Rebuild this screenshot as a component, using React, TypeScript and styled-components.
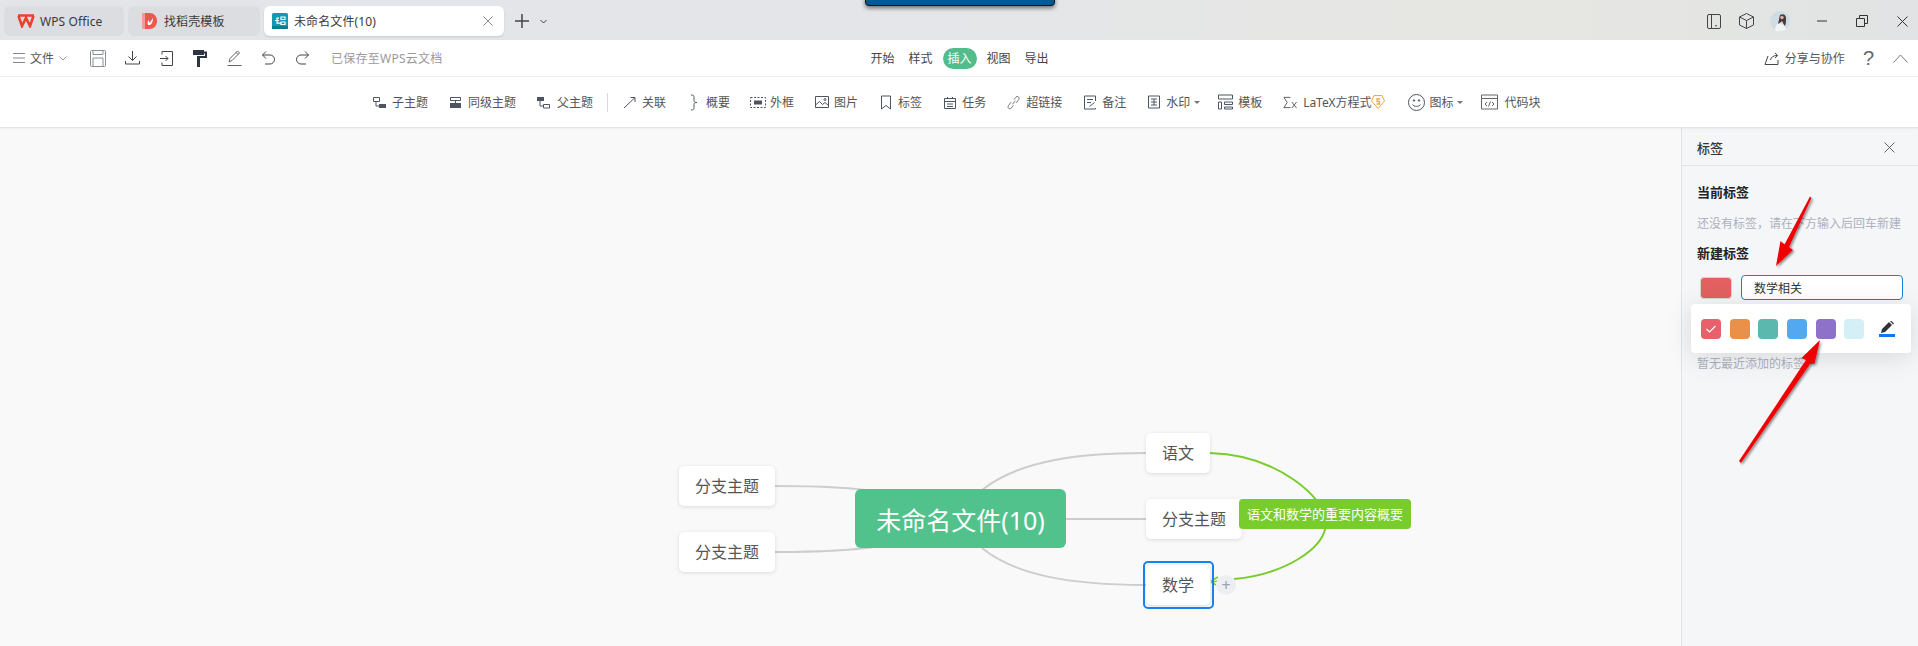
import * as React from 'react';
import styled, { createGlobalStyle } from 'styled-components';

const GlobalStyle = createGlobalStyle`
    html, body {
        margin: 0;
        padding: 0;
        overflow: hidden;
    }
    body {
        font-family: "Noto Sans", "Noto Sans CJK SC", sans-serif;
        font-size: 12px;
        color: #555;
    }
`;

const Page = styled.div`
    position: relative;
    display: flex;
    flex-direction: column;
    width: 1918px;
    height: 646px;
    overflow: hidden;
`;

const TitleBar = styled.div`
    display: flex;
    align-items: flex-start;
    flex: none;
    height: 40px;
    box-sizing: border-box;
    padding: 6px 6px 0 4px;
    background: linear-gradient(90deg, #e3e5e9 0%, #e3e5e9 45%, #e6e7e2 78%, #e1e3e4 100%);
`;

const Tab = styled.div<{ $w: number; $pl: number; $active?: boolean }>`
    display: flex;
    align-items: center;
    flex: none;
    width: ${p => p.$w}px;
    height: 30px;
    box-sizing: border-box;
    margin-right: 4px;
    padding-left: ${p => p.$pl}px;
    border-radius: 6px;
    background: ${p => (p.$active ? '#fff' : '#dbdde1')};
    box-shadow: ${p => (p.$active ? '0 1px 2px rgba(0,0,0,.12)' : 'none')};
    color: #3a3a3a;
    font-size: 12px;
`;

const TabLabel = styled.span<{ $ml: number }>`
    margin-left: ${p => p.$ml}px;
    white-space: nowrap;
    letter-spacing: .1px;
`;

const TabClose = styled.span`
    display: flex;
    margin-left: auto;
    margin-right: 11px;
`;

const NewTab = styled.div`
    display: flex;
    align-items: center;
    gap: 11px;
    height: 30px;
    margin-left: 7px;
`;

const WindowControls = styled.div`
    display: flex;
    align-items: center;
    height: 30px;
    margin-left: auto;
`;

const WindowControl = styled.span<{ $ml: number }>`
    display: flex;
    justify-content: center;
    width: 20px;
    margin-left: ${p => p.$ml}px;
`;

const ScreenEdge = styled.div`
    position: absolute;
    top: -3px;
    left: 865px;
    width: 190px;
    height: 9px;
    box-sizing: border-box;
    border: 1px solid #0b1218;
    border-radius: 0 0 4px 4px;
    background: #005a90;
    box-shadow: 0 2px 4px rgba(0,0,0,.55);
`;

const MenuBar = styled.div`
    display: grid;
    grid-template-columns: 1fr auto 1fr;
    align-items: center;
    flex: none;
    height: 37px;
    box-sizing: border-box;
    border-bottom: 1px solid #ededed;
    background: #fff;
`;

const MenuLeft = styled.div`
    display: flex;
    align-items: center;
    padding-left: 13px;
`;

const MenuIcon = styled.span<{ $ml: number }>`
    display: flex;
    justify-content: center;
    width: 18px;
    margin-left: ${p => p.$ml}px;
`;

const FileLabel = styled.span`
    margin: 0 5px;
    color: #555;
`;

const SavedText = styled.span`
    margin-left: 20px;
    color: #9a9a9a;
    white-space: nowrap;
    letter-spacing: .25px;
`;

const MenuTabs = styled.div`
    display: flex;
    align-items: center;
    gap: 10px;
    margin-left: 1px;
`;

const MenuTab = styled.span<{ $active?: boolean }>`
    display: flex;
    align-items: center;
    justify-content: center;
    width: ${p => (p.$active ? 34 : 24)}px;
    height: 21px;
    border-radius: 11px;
    background: ${p => (p.$active ? '#52bd8b' : 'transparent')};
    color: ${p => (p.$active ? '#fff' : '#444')};

    &:first-child {
        margin-right: 4px;
    }
    &:last-child {
        margin-left: 4px;
    }
`;

const MenuRight = styled.div`
    display: flex;
    align-items: center;
    justify-content: flex-end;
    padding-right: 10px;
`;

const ShareLabel = styled.span`
    margin-left: 6px;
    color: #555;
`;

const HelpMark = styled.span`
    margin-left: 18px;
    color: #666;
    font-family: "Liberation Sans", sans-serif;
    font-size: 20px;
    line-height: 20px;
`;

const CollapseIcon = styled.span`
    display: flex;
    margin-left: 19px;
`;

const Ribbon = styled.div`
    display: flex;
    align-items: center;
    flex: none;
    height: 51px;
    box-sizing: border-box;
    padding-left: 373px;
    border-bottom: 1px solid #e4e4e4;
    background: #fff;
    box-shadow: 0 1px 2px rgba(0,0,0,.05);
    position: relative;
    z-index: 1;
`;

const RibbonItem = styled.div<{ $ml: number }>`
    display: flex;
    align-items: center;
    flex: none;
    margin-left: ${p => p.$ml}px;
    color: #555;
    white-space: nowrap;
`;

const RibbonIcon = styled.span<{ $w: number; $gap: number }>`
    display: flex;
    justify-content: center;
    width: ${p => p.$w}px;
    margin-right: ${p => p.$gap}px;
`;

const RibbonSeparator = styled.span`
    flex: none;
    width: 1px;
    height: 19px;
    margin: 0 15px 0 14px;
    background: #d9d9d9;
`;

const Caret = styled.span`
    width: 0;
    height: 0;
    margin-left: 4px;
    border-left: 3px solid transparent;
    border-right: 3px solid transparent;
    border-top: 3px solid #777;
`;

const LatexLabel = styled.span`
    letter-spacing: -.05px;
`;

const Workspace = styled.div`
    display: flex;
    flex: 1;
    min-height: 0;
`;

const Canvas = styled.div`
    position: relative;
    flex: 1;
    background: #f9f9f9;
`;

const MapLines = styled.svg`
    position: absolute;
    inset: 0;
    width: 100%;
    height: 100%;
`;

const MapNode = styled.div<{ $x: number; $y: number; $w: number }>`
    position: absolute;
    left: ${p => p.$x}px;
    top: ${p => p.$y}px;
    display: flex;
    align-items: center;
    justify-content: center;
    width: ${p => p.$w}px;
    height: 40px;
    box-sizing: border-box;
    padding-bottom: 2px;
    border-radius: 5px;
    background: #fff;
    box-shadow: 0 1px 4px rgba(0,0,0,.12);
    color: #555;
    font-size: 16px;
`;

const RootNode = styled.div`
    position: absolute;
    left: 855px;
    top: 361px;
    display: flex;
    align-items: center;
    justify-content: center;
    width: 211px;
    height: 59px;
    border-radius: 6px;
    background: #52c28c;
    color: #fff;
    font-size: 25px;
`;

const SummaryNode = styled.div`
    position: absolute;
    left: 1239px;
    top: 371px;
    display: flex;
    align-items: center;
    justify-content: center;
    width: 172px;
    height: 30px;
    box-sizing: border-box;
    padding-bottom: 2px;
    border-radius: 4px;
    background: #78cd2c;
    color: #fff;
    font-size: 13px;
    white-space: nowrap;
`;

const SelectionRing = styled.div`
    position: absolute;
    left: 1143px;
    top: 433px;
    width: 71px;
    height: 48px;
    box-sizing: border-box;
    border: 2px solid #1781f0;
    border-radius: 5px;
`;

const AddButton = styled.div`
    position: absolute;
    left: 1216px;
    top: 447px;
    display: flex;
    align-items: center;
    justify-content: center;
    width: 20px;
    height: 20px;
    border-radius: 50%;
    background: #eceef2;
    color: #9aa3b5;
    font-size: 16px;
    line-height: 20px;
`;

const SidePanel = styled.aside`
    position: relative;
    flex: none;
    width: 237px;
    box-sizing: border-box;
    border-left: 1px solid #e2e3e6;
    background: #f5f6f8;
`;

const PanelHeader = styled.div`
    display: flex;
    align-items: center;
    justify-content: space-between;
    height: 38px;
    box-sizing: border-box;
    padding: 1px 23px 0 15px;
    border-bottom: 1px solid #e2e3e6;
    color: #333;
    font-size: 13px;
    font-weight: 500;
`;

const PanelBody = styled.div`
    padding: 17px 15px 0;
`;

const PanelHeading = styled.div<{ $mt?: number }>`
    margin-top: ${p => p.$mt || 0}px;
    color: #222;
    font-size: 13px;
    line-height: 18px;
    font-weight: 700;
`;

const PanelHint = styled.div<{ $mt: number }>`
    margin-top: ${p => p.$mt}px;
    color: #adb1bd;
    font-size: 12px;
    line-height: 18px;
    white-space: nowrap;
`;

const NewTagRow = styled.div`
    display: flex;
    align-items: center;
    gap: 9px;
    height: 25px;
    margin-top: 13px;
    padding-left: 3px;
`;

const ColorChip = styled.div`
    flex: none;
    width: 32px;
    height: 22px;
    box-sizing: border-box;
    border: 1px solid #d9d2d2;
    border-radius: 4px;
    background: #e26060;
`;

const TagInput = styled.div`
    display: flex;
    align-items: center;
    flex: 1;
    height: 25px;
    box-sizing: border-box;
    padding-left: 12px;
    border: 1px solid #1a7ee0;
    border-radius: 4px;
    background: #fff;
    color: #333;
`;

const ColorPopup = styled.div`
    position: absolute;
    left: 9px;
    top: 176px;
    display: flex;
    align-items: center;
    gap: 8.7px;
    width: 220px;
    height: 49px;
    box-sizing: border-box;
    padding: 0 16px 0 10px;
    border-radius: 4px;
    background: #fff;
    box-shadow: 0 4px 26px rgba(0,0,0,.12);
`;

const ColorSwatch = styled.span<{ $color: string }>`
    display: flex;
    align-items: center;
    justify-content: center;
    flex: none;
    width: 20px;
    height: 20px;
    border-radius: 4px;
    background: ${p => p.$color};
`;

const PenButton = styled.span`
    display: flex;
    flex-direction: column;
    align-items: center;
    gap: 1px;
    width: 16px;
    margin-left: auto;
`;

const PenUnderline = styled.span`
    width: 16px;
    height: 3px;
    background: #1a73f0;
`;

const ArrowLayer = styled.svg`
    position: absolute;
    inset: 0;
    width: 100%;
    height: 100%;
    pointer-events: none;
    z-index: 5;
`;

const INK = '#4d5563';

function Glyph({ w = 14, h = 14, children, stroke = INK, sw = 1 }: { w?: number; h?: number; children: React.ReactNode; stroke?: string; sw?: number }) {
    return (
        <svg width={w} height={h} viewBox={`0 0 ${w} ${h}`} fill="none" stroke={stroke} strokeWidth={sw}>
            {children}
        </svg>
    );
}

const ribbonItems = [
    { label: '子主题', ml: 0, w: 13, gap: 6, icon: <Glyph w={13} h={13}><path d="M.5 1.500h6v4h-6zM3 5.500v4.500h3" /><rect x="6" y="8" width="7" height="4" fill={INK} stroke="none" /></Glyph> },
    { label: '同级主题', ml: 21, w: 13, gap: 6, icon: <Glyph w={13} h={13}><path d="M1.500 1.500h10v3h-10zM6.500 4.500v3" /><rect x="1" y="7" width="11" height="5" fill={INK} stroke="none" /></Glyph> },
    { label: '父主题', ml: 21, w: 13, gap: 7, icon: <Glyph w={13} h={13}><rect x="0" y="1" width="7" height="4" fill={INK} stroke="none" /><path d="M3 5v5h3M6.500 8.500h6v3.500h-6z" /></Glyph> },
    { label: '关联', ml: 0, w: 13, gap: 6, icon: <Glyph w={13} h={13}><path d="M1 12 12 1.500M7.500 1.500H12V6" /></Glyph> },
    { label: '概要', ml: 24, w: 10, gap: 6, icon: <Glyph w={10} h={17}><path d="M1 1c3 0 3 1 3 3v2.500c0 1.500 1 2 3 2-2 0-3 .5-3 2V13c0 2 0 3-3 3" /></Glyph> },
    { label: '外框', ml: 20, w: 16, gap: 4, icon: <Glyph w={16} h={13}><path d="M.5 1.500h15v10H.5z" strokeDasharray="2 1.500" /><rect x="4" y="4.500" width="8" height="4" fill={INK} stroke="none" /></Glyph> },
    { label: '图片', ml: 21, w: 14, gap: 5, icon: <Glyph w={14} h={14}><path d="M.5 1.500h13v11H.5zM.5 10l4-3.500 3 3 2.500-2 3.500 3" /><circle cx="10" cy="4.500" r="1" /></Glyph> },
    { label: '标签', ml: 23, w: 10, gap: 7, icon: <Glyph w={10} h={15}><path d="M.5 1h9v13L5 10.500.5 14z" /></Glyph> },
    { label: '任务', ml: 22, w: 12, gap: 6, icon: <Glyph w={12} h={13}><path d="M.5 2.500h11v10H.5zM.5 5.500h11M3.500 1v2M8.500 1v2M3 8h6M3 10.500h6" /></Glyph> },
    { label: '超链接', ml: 21, w: 13, gap: 6, icon: <Glyph w={14} h={15} stroke="#777"><path d="M6 9.500 9 5.500M4.500 7 1.500 11a2 2 0 0 0 3.200 2.500L7 10.500M7.500 4.500l2-2.700a2 2 0 0 1 3.200 2.400L10 8" /></Glyph> },
    { label: '备注', ml: 22, w: 12, gap: 6, icon: <Glyph w={12} h={15}><path d="M11.500 6V1H.5v13h11v-1M3 4.500h6M3 7.500h4M5.500 11.500l5-4" /></Glyph> },
    { label: '水印', ml: 22, w: 12, gap: 6, caret: true, icon: <Glyph w={12} h={14}><path d="M.5 1h11v12H.5zM3 4h6M6 4v6M3 7h6M3 10h6" /></Glyph> },
    { label: '模板', ml: 18, w: 15, gap: 5, icon: <Glyph w={15} h={16}><path d="M.5 1h14v4H.5zM.5 8h3v7h-3zM6.500 8h8v2.500h-8zM6.500 13h8v2h-8z" /></Glyph> },
];

const ribbonTail = [
    { label: '图标', ml: 23, w: 17, gap: 4, caret: true, icon: <Glyph w={17} h={17}><circle cx="8.500" cy="8.500" r="8" /><path d="M4.500 10.500c1.500 2.500 6.500 2.500 8 0" /><circle cx="6" cy="6.500" r=".7" fill={INK} /><circle cx="11" cy="6.500" r=".7" fill={INK} /></Glyph> },
    { label: '代码块', ml: 18, w: 17, gap: 6, icon: <Glyph w={17} h={16} stroke="#666"><path d="M.5 1h16v14H.5zM.5 4.500h16M6 8l-2 2 2 2M11 8l2 2-2 2M9.500 7.500l-2 5" /></Glyph> },
];

function RibbonEntry({ item }: { item: { label: React.ReactNode; ml: number; w: number; gap: number; icon: React.ReactNode; caret?: boolean } }) {
    return (
        <RibbonItem $ml={item.ml}>
            <RibbonIcon $w={item.w} $gap={item.gap}>{item.icon}</RibbonIcon>
            {item.label}
            {item.caret && <Caret />}
        </RibbonItem>
    );
}

function App() {
    return (
        <Page>
            <GlobalStyle />
            <TitleBar>
                <Tab $w={120} $pl={13}>
                    <svg width="18" height="14" viewBox="0 0 18 14" fill="none" stroke="#f0402c" strokeWidth="2.600">
                        <path d="M1.500 2 5 12l4-8 4 8 3.500-10M1 1.500h16" />
                    </svg>
                    <TabLabel $ml={5}>WPS Office</TabLabel>
                </Tab>
                <Tab $w={132} $pl={14}>
                    <svg width="15" height="18" viewBox="0 0 15 18">
                        <path d="M0 1h7c5 0 8 3.500 8 8s-3 8-8 8H0z" fill="#ee5650" />
                        <rect x="0" y="1" width="3" height="16" fill="#f59a94" />
                        <path d="M6 13c-1-3 0-4 1-5 0 1 0 2 1 3 1-2 2-4 3-5 0 3-1 6-3 7z" fill="#fff" />
                    </svg>
                    <TabLabel $ml={7}>找稻壳模板</TabLabel>
                </Tab>
                <Tab $w={240} $pl={8} $active>
                    <svg width="16" height="16" viewBox="0 0 16 16" fill="none">
                        <rect width="16" height="16" rx="1.500" fill="#109bb0" />
                        <rect y="13" width="16" height="3" fill="#0a7f92" />
                        <path d="M9 4h4v2.500H9zM9 9h4v2.500H9zM7 5.200H5v5h4M3 7.500h4" stroke="#fff" strokeWidth="1.200" />
                    </svg>
                    <TabLabel $ml={6}>未命名文件(10)</TabLabel>
                    <TabClose>
                        <Glyph w={10} h={10} stroke="#8a8a8a"><path d="M.5.500l9 9M9.500.500l-9 9" /></Glyph>
                    </TabClose>
                </Tab>
                <NewTab>
                    <Glyph w={14} h={14} stroke="#444" sw={1.500}><path d="M7 0v14M0 7h14" /></Glyph>
                    <Glyph w={7} h={5} stroke="#444"><path d="M.5 1 3.500 4l3-3" /></Glyph>
                </NewTab>
                <WindowControls>
                    <WindowControl $ml={0}>
                        <Glyph w={14} h={15} stroke="#444">
                            <rect x=".5" y=".5" width="13" height="14" rx="1.500" />
                            <path d="M4.500.5v14M8 11.800h2" />
                        </Glyph>
                    </WindowControl>
                    <WindowControl $ml={12}>
                        <Glyph w={15} h={16} stroke="#444"><path d="M7.500.5 14.500 4v8l-7 3.500L.5 12V4zM.5 4l7 3.500L14.500 4M7.500 7.500v8" /></Glyph>
                    </WindowControl>
                    <WindowControl $ml={14}>
                        <svg width="20" height="20" viewBox="0 0 20 20">
                            <circle cx="10" cy="10" r="10" fill="#cfdde2" />
                            <path d="M5 20c0-4 1-7 4-8l5 2 2 4c-2 2-8 3-11 2z" fill="#f0f4f5" />
                            <path d="M10 4c3-2 6 0 6 3 0 3 0 6-1 8-1-1-2-3-3-5-1 1-2 2-4 3 1-3 1-6 2-9z" fill="#4a3a3a" />
                            <circle cx="12" cy="6.500" r="1.700" fill="#e3b2ac" />
                        </svg>
                    </WindowControl>
                    <WindowControl $ml={22}>
                        <Glyph w={10} h={2} stroke="#333"><path d="M0 1h10" /></Glyph>
                    </WindowControl>
                    <WindowControl $ml={20}>
                        <Glyph w={12} h={12} stroke="#333"><path d="M.5 3.500h8v8h-8zM3.500 3.500v-3h8v8h-3" /></Glyph>
                    </WindowControl>
                    <WindowControl $ml={20}>
                        <Glyph w={11} h={11} stroke="#333"><path d="M.5.500l10 10M10.500.500l-10 10" /></Glyph>
                    </WindowControl>
                </WindowControls>
            </TitleBar>
            <ScreenEdge />
            <MenuBar>
                <MenuLeft>
                    <Glyph w={12} h={10} stroke="#888"><path d="M0 .5h12M0 5h12M0 9.500h12" /></Glyph>
                    <FileLabel>文件</FileLabel>
                    <Glyph w={8} h={5} stroke="#999"><path d="M.5.500 4 4 7.500.5" /></Glyph>
                    <MenuIcon $ml={22}>
                        <Glyph w={16} h={17} stroke="#8a8f96"><path d="M1.500.5h13a1 1 0 0 1 1 1v14a1 1 0 0 1-1 1h-13a1 1 0 0 1-1-1v-14a1 1 0 0 1 1-1zM3 .5v4h10v-4M3 16.500V8h10v8.500" /></Glyph>
                    </MenuIcon>
                    <MenuIcon $ml={16}>
                        <Glyph w={15} h={14} stroke="#444"><path d="M7.500 0v9M3.500 5.500l4 4 4-4M.5 10v3h14v-3" /></Glyph>
                    </MenuIcon>
                    <MenuIcon $ml={16}>
                        <Glyph w={13} h={15} stroke="#444"><path d="M2 3.500V.5h10.500v14H2v-3M0 7.500h8M5.500 5l2.500 2.500L5.500 10" /></Glyph>
                    </MenuIcon>
                    <MenuIcon $ml={16}>
                        <svg width="14" height="17" viewBox="0 0 14 17">
                            <path d="M0 0h11v5H0zM11 1.500h3V8H7v9H4V6h8V3.500h-1z" fill="#2d3640" />
                        </svg>
                    </MenuIcon>
                    <MenuIcon $ml={16}>
                        <Glyph w={15} h={16} stroke="#666"><path d="M.5 15.500h14M2 12l1-3.500L10.500 1l2 2L5 10.500zM9 2.500l2 2" /></Glyph>
                    </MenuIcon>
                    <MenuIcon $ml={16}>
                        <Glyph w={13} h={14} stroke="#444"><path d="M4 .5.500 4 4 7.500M.5 4H8a4.500 4.500 0 0 1 0 9H3" /></Glyph>
                    </MenuIcon>
                    <MenuIcon $ml={16}>
                        <Glyph w={13} h={14} stroke="#444"><path d="M9 .5 12.500 4 9 7.500M12.500 4H5a4.500 4.500 0 0 0 0 9h5" /></Glyph>
                    </MenuIcon>
                    <SavedText>已保存至WPS云文档</SavedText>
                </MenuLeft>
                <MenuTabs>
                    <MenuTab>开始</MenuTab>
                    <MenuTab>样式</MenuTab>
                    <MenuTab $active>插入</MenuTab>
                    <MenuTab>视图</MenuTab>
                    <MenuTab>导出</MenuTab>
                </MenuTabs>
                <MenuRight>
                    <Glyph w={15} h={13} stroke="#444"><path d="M4 4 1 12.500h13V8M6.500 8C7 5 9.500 3.500 13 3.500M11 1l2.700 2.500L11 6" /></Glyph>
                    <ShareLabel>分享与协作</ShareLabel>
                    <HelpMark>?</HelpMark>
                    <CollapseIcon>
                        <Glyph w={15} h={9} stroke="#777"><path d="M.5 8.500 7.500 1l7 7.500" /></Glyph>
                    </CollapseIcon>
                </MenuRight>
            </MenuBar>
            <Ribbon>
                {ribbonItems.slice(0, 3).map(item => <RibbonEntry key={item.label} item={item} />)}
                <RibbonSeparator />
                {ribbonItems.slice(3).map(item => <RibbonEntry key={item.label} item={item} />)}
                <RibbonEntry
                    item={{
                        label: <><LatexLabel>LaTeX方程式</LatexLabel><svg width="14" height="16" viewBox="0 0 14 16" fill="none" stroke="#f2a93b"><path d="M3 1.500h8L13.500 7 7 14.500.5 7z" /><path d="M9 5H6v2.500h2.500V10H5.500" strokeWidth="1.300" /></svg></>,
                        ml: 21,
                        w: 14,
                        gap: 6,
                        icon: <Glyph w={15} h={13} stroke="#555"><path d="M8 1H1l3.500 5.500L1 12h7M9.500 6l5 6.500M14.500 6l-5 6.500" /></Glyph>,
                    }}
                />
                {ribbonTail.map(item => <RibbonEntry key={item.label} item={item} />)}
            </Ribbon>
            <Workspace>
                <Canvas>
                    <MapLines viewBox="0 1 1681 518">
                        <g fill="none" stroke="#cdcdcd" strokeWidth="2">
                            <path d="M775 359C810 359 850 360 880 365" />
                            <path d="M775 425C810 425 850 424 880 419" />
                            <path d="M1146 326C1080 326 1020 333 982 363" />
                            <path d="M1066 392H1146" />
                            <path d="M982 421C1015 448 1070 458 1146 458" />
                        </g>
                        <path d="M1210 326C1280 328 1325 373 1326 393C1328 423 1280 448 1234 452" fill="none" stroke="#78cd2c" strokeWidth="2" />
                        <path d="M1218 450 1211 454M1218 454 1212 455M1216 458 1211 455" fill="none" stroke="#78cd2c" strokeWidth="1.500" />
                    </MapLines>
                    <MapNode $x={679} $y={338} $w={96}>分支主题</MapNode>
                    <MapNode $x={679} $y={404} $w={96}>分支主题</MapNode>
                    <MapNode $x={1146} $y={305} $w={64}>语文</MapNode>
                    <MapNode $x={1146} $y={371} $w={96}>分支主题</MapNode>
                    <MapNode $x={1146} $y={437} $w={64}>数学</MapNode>
                    <RootNode>未命名文件(10)</RootNode>
                    <SummaryNode>语文和数学的重要内容概要</SummaryNode>
                    <SelectionRing />
                    <AddButton>+</AddButton>
                </Canvas>
                <SidePanel>
                    <PanelHeader>
                        标签
                        <Glyph w={11} h={11} stroke="#666"><path d="M.5.500l10 10M10.500.500l-10 10" /></Glyph>
                    </PanelHeader>
                    <PanelBody>
                        <PanelHeading>当前标签</PanelHeading>
                        <PanelHint $mt={14}>还没有标签，请在下方输入后回车新建</PanelHint>
                        <PanelHeading $mt={11}>新建标签</PanelHeading>
                        <NewTagRow>
                            <ColorChip />
                            <TagInput>数学相关</TagInput>
                        </NewTagRow>
                        <PanelHint $mt={55}>暂无最近添加的标签</PanelHint>
                    </PanelBody>
                    <ColorPopup>
                        <ColorSwatch $color="#e8606a">
                            <Glyph w={10} h={8} stroke="#fff" sw={1.200}><path d="M.5 4 3.500 7 9.500 1" /></Glyph>
                        </ColorSwatch>
                        <ColorSwatch $color="#e99049" />
                        <ColorSwatch $color="#5bb8ae" />
                        <ColorSwatch $color="#52a9ef" />
                        <ColorSwatch $color="#8e72c9" />
                        <ColorSwatch $color="#d4eff6" />
                        <PenButton>
                            <svg width="13" height="12" viewBox="0 0 13 12">
                                <path d="M0 12l1-4 7-7 3 3-7 7zM9 0l1-.5 3 3-1 1z" fill="#333" />
                            </svg>
                            <PenUnderline />
                        </PenButton>
                    </ColorPopup>
                </SidePanel>
            </Workspace>
            <ArrowLayer viewBox="0 0 1918 646">
                <defs>
                    <filter id="arrowShadow" x="-30%" y="-30%" width="160%" height="160%">
                        <feDropShadow dx="1.500" dy="1.500" stdDeviation="1.200" floodColor="#000" floodOpacity=".45" />
                    </filter>
                </defs>
                <g fill="#f00000" filter="url(#arrowShadow)">
                    <path d="M1810 196.500 1811.500 198 1789 247 1793 250 1776 266 1780.500 241 1784.500 244.500z" />
                    <path d="M1739 461 1741 463 1810 364 1814.500 363.500 1820 340 1801.500 358 1806 360z" />
                </g>
            </ArrowLayer>
        </Page>
    );
}

export default App;
